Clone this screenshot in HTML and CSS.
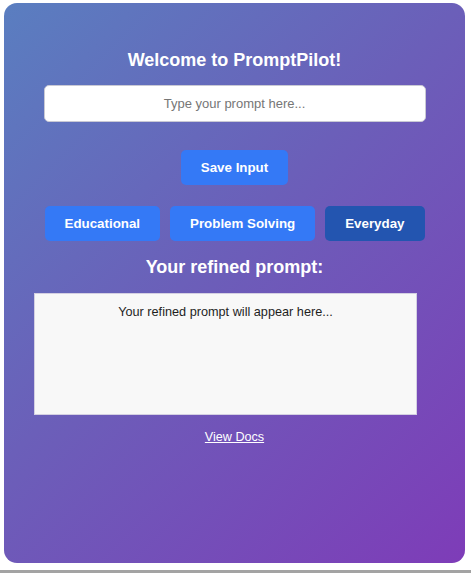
FILE: index.html
```html
<!DOCTYPE html>
<html lang="en">
<head>
<meta charset="utf-8">
<title>PromptPilot</title>
<link rel="stylesheet" href="styles.css">
</head>
<body>
<div class="card">
  <h1 class="title">Welcome to PromptPilot!</h1>
  <input class="prompt-input" type="text" placeholder="Type your prompt here...">
  <button class="btn save-btn">Save Input</button>
  <div class="mode-row">
    <button class="btn">Educational</button>
    <button class="btn">Problem Solving</button>
    <button class="btn btn-active">Everyday</button>
  </div>
  <h2 class="subtitle">Your refined prompt:</h2>
  <div class="output-wrap">
    <div class="output">Your refined prompt will appear here...</div>
  </div>
  <a class="docs-link" href="#">View Docs</a>
</div>
<div class="bottom-line"></div>
</body>
</html>
```
FILE: styles.css
```css
html, body {
  margin: 0;
  padding: 0;
  background: #ffffff;
}

body {
  font-family: "Liberation Sans", Arial, Helvetica, sans-serif;
  padding-top: 3px;
  padding-left: 4px;
}

.card {
  box-sizing: border-box;
  width: 461px;
  height: 560px;
  border-radius: 13px;
  background: linear-gradient(135deg, #5a7ec0 0%, #6b5fb9 45%, #7e3cb8 100%);
  display: flex;
  flex-direction: column;
  align-items: center;
  padding-top: 46px;
}

.title {
  margin: 0;
  font-size: 18px;
  line-height: 22px;
  font-weight: bold;
  color: #ffffff;
}

.prompt-input {
  box-sizing: border-box;
  margin-top: 14px;
  width: 382px;
  height: 37px;
  border: 1px solid #c9c9d4;
  border-radius: 5px;
  background: #ffffff;
  font-family: "Liberation Sans", Arial, sans-serif;
  font-size: 13px;
  text-align: center;
  color: #333;
  outline: none;
  padding: 0 10px;
}

.prompt-input::placeholder {
  color: #767676;
}

.btn {
  box-sizing: border-box;
  height: 35px;
  padding: 0 20px;
  border: none;
  border-radius: 5px;
  background: #3479f6;
  color: #ffffff;
  font-family: "Liberation Sans", Arial, sans-serif;
  font-size: 13.33px;
  font-weight: bold;
  cursor: pointer;
}

.btn-active {
  background: #2355b0;
}

.save-btn {
  margin-top: 28px;
}

.mode-row {
  margin-top: 21px;
  display: flex;
  gap: 10px;
}

.subtitle {
  margin: 15px 0 0 0;
  font-size: 18px;
  line-height: 22px;
  font-weight: bold;
  color: #ffffff;
}

.output-wrap {
  align-self: stretch;
  display: flex;
  padding-left: 30px;
  margin-top: 15px;
}

.output {
  box-sizing: border-box;
  width: 383px;
  height: 122px;
  border: 1px solid #d4d0e2;
  background: #f8f8f8;
  padding: 10px;
  font-size: 12.7px;
  line-height: 16px;
  color: #1e1e1e;
  text-align: center;
}

.docs-link {
  margin-top: 14px;
  font-size: 12.6px;
  line-height: 16px;
  color: #ffffff;
  text-decoration: underline;
}

.bottom-line {
  margin-top: 7px;
  margin-left: -4px;
  height: 3px;
  background: #a3a3a3;
}
```
